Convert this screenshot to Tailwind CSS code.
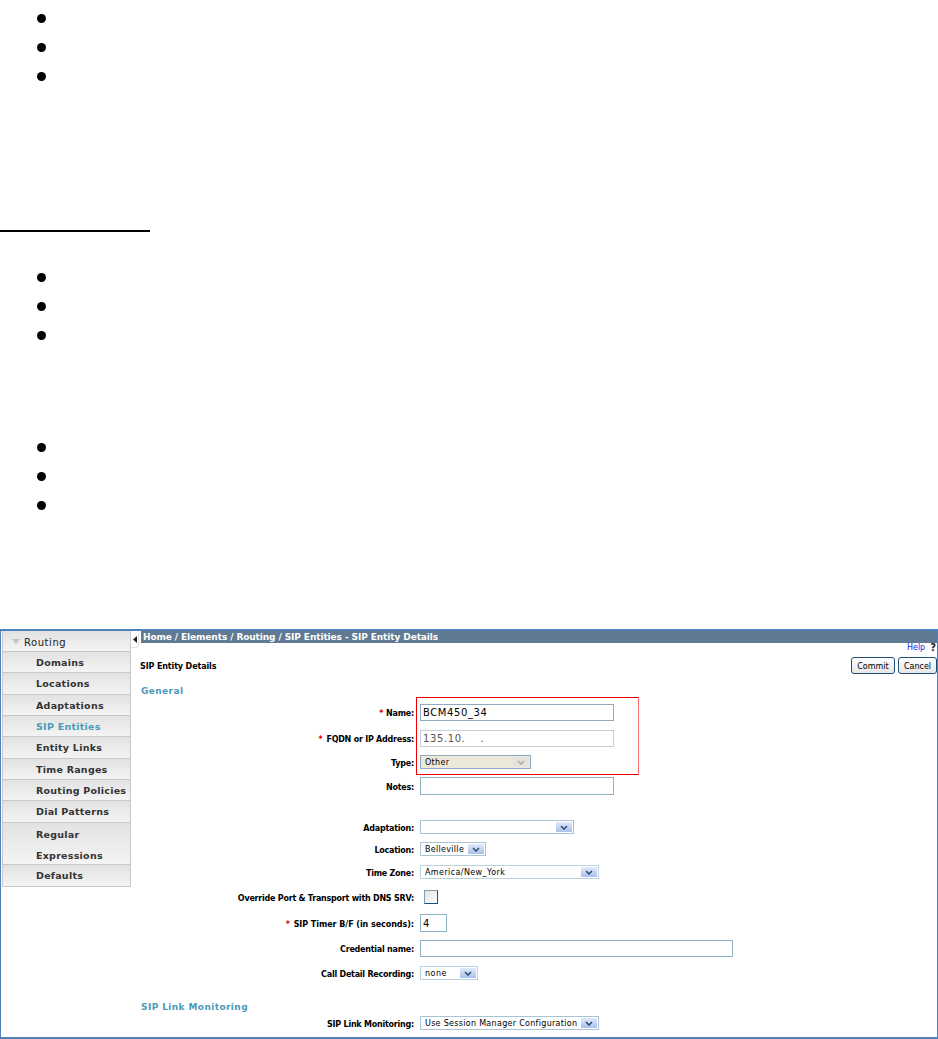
<!DOCTYPE html>
<html lang="en">
<head>
  <meta charset="UTF-8" />
  <title>SIP Entity Details</title>
  <script src="https://cdn.jsdelivr.net/npm/@tailwindcss/browser@4"></script>
</head>
<body class="bg-white w-[938px] h-[1039px] overflow-hidden font-['DejaVu_Sans',sans-serif] text-[8px] text-black">
  <!-- document text above the screenshot -->
  <div class="h-[629px] pt-[14px]">
    <div class="flex flex-col gap-[20px] ml-[37px]">
      <div class="w-[9px] h-[9px] rounded-full bg-black"></div>
      <div class="w-[9px] h-[9px] rounded-full bg-black"></div>
      <div class="w-[9px] h-[9px] rounded-full bg-black"></div>
    </div>
    <div class="w-[150px] h-[2px] bg-black mt-[149px]"></div>
    <div class="flex flex-col gap-[20px] ml-[37px] mt-[41px]">
      <div class="w-[9px] h-[9px] rounded-full bg-black"></div>
      <div class="w-[9px] h-[9px] rounded-full bg-black"></div>
      <div class="w-[9px] h-[9px] rounded-full bg-black"></div>
    </div>
    <div class="flex flex-col gap-[20px] ml-[37px] mt-[103px]">
      <div class="w-[9px] h-[9px] rounded-full bg-black"></div>
      <div class="w-[9px] h-[9px] rounded-full bg-black"></div>
      <div class="w-[9px] h-[9px] rounded-full bg-black"></div>
    </div>
  </div>

  <!-- screenshot panel -->
  <div class="relative h-[410px] flex border-t-2 border-b-2 border-l border-r border-[#4f81bd]">
    <!-- sidebar -->
    <div class="ml-[1px] w-[129px] h-[256px] shrink-0 border-x border-b border-[#c8c8c8] text-[#333] font-bold text-[9.5px] tracking-[0.25px]">
      <div class="h-[21px] flex items-center pt-[2px] pl-[9px] border-b border-[#c8c8c8] bg-gradient-to-b from-[#e2e2e2] to-[#f4f4f4]">
        <svg class="w-[8px] h-[5px] mr-[4px] -mt-[2px]" viewBox="0 0 8 5"><path d="M0 0h8L4 5z" fill="#c4c4c4"/></svg>
        <span class="font-normal text-[10px] tracking-[0.55px] text-[#222]">Routing</span>
      </div>
      <div class="h-[21px] flex items-center pt-[2px] pl-[33px] border-b border-[#c8c8c8] bg-gradient-to-b from-[#e2e2e2] to-[#f4f4f4]">Domains</div>
      <div class="h-[22px] flex items-center pt-[2px] pl-[33px] border-b border-[#c8c8c8] bg-gradient-to-b from-[#e2e2e2] to-[#f4f4f4]">Locations</div>
      <div class="h-[21px] flex items-center pt-[2px] pl-[33px] border-b border-[#c8c8c8] bg-gradient-to-b from-[#e2e2e2] to-[#f4f4f4]">Adaptations</div>
      <div class="h-[21px] flex items-center pt-[2px] pl-[33px] border-b border-[#c8c8c8] bg-gradient-to-b from-[#e2e2e2] to-[#f4f4f4] text-[#4b9ab8]">SIP Entities</div>
      <div class="h-[22px] flex items-center pt-[2px] pl-[33px] border-b border-[#c8c8c8] bg-gradient-to-b from-[#e2e2e2] to-[#f4f4f4]">Entity Links</div>
      <div class="h-[21px] flex items-center pt-[2px] pl-[33px] border-b border-[#c8c8c8] bg-gradient-to-b from-[#e2e2e2] to-[#f4f4f4]">Time Ranges</div>
      <div class="h-[21px] flex items-center pt-[2px] pl-[33px] border-b border-[#c8c8c8] bg-gradient-to-b from-[#e2e2e2] to-[#f4f4f4]">Routing Policies</div>
      <div class="h-[22px] flex items-center pt-[2px] pl-[33px] border-b border-[#c8c8c8] bg-gradient-to-b from-[#e2e2e2] to-[#f4f4f4]">Dial Patterns</div>
      <div class="h-[42px] flex flex-col justify-center gap-[9px] pt-[3px] pl-[33px] border-b border-[#c8c8c8] bg-gradient-to-b from-[#e2e2e2] to-[#f4f4f4] leading-[12px]"><span>Regular</span><span>Expressions</span></div>
      <div class="h-[21px] flex items-center pt-[2px] pl-[33px] bg-gradient-to-b from-[#e2e2e2] to-[#f4f4f4]">Defaults</div>
    </div>
    <!-- collapse tab -->
    <div class="w-[10px] shrink-0">
      <div class="w-[8px] h-[17px] flex items-center justify-center rounded-br-[3px] border-r border-b border-[#e4e4e4]">
        <svg class="w-[4px] h-[7px]" viewBox="0 0 4 7"><path d="M4 0v7L0 3.5z" fill="#222"/></svg>
      </div>
    </div>
    <!-- main column -->
    <div class="flex-1 min-w-0 font-bold tracking-[-0.23px]">
      <div class="h-[12px] bg-[#5f7a92] text-white text-[9px] leading-[12px] pl-[2px] tracking-[-0.1px] whitespace-nowrap">Home / Elements / Routing / SIP Entities - SIP Entity Details</div>
      <div class="h-[9px] flex justify-end items-center gap-[5px] pr-[1px] font-normal tracking-[0px]">
        <span class="text-[#1a1ae6]">Help</span><span class="font-bold text-[10px] text-[#222]">?</span>
      </div>
      <div class="mt-[5px] h-[17px] flex items-center justify-between">
        <span class="text-[8px] -ml-[1px] pt-[3px] tracking-[-0.12px]">SIP Entity Details</span>
        <div class="flex gap-[3px] font-normal tracking-[0px]">
          <div class="w-[44px] h-[17px] flex items-center justify-center pt-[2px] rounded-[3px] border border-[#1f4e79] bg-gradient-to-b from-white to-[#e6e6e6]">Commit</div>
          <div class="w-[39px] h-[17px] flex items-center justify-center pt-[2px] rounded-[3px] border border-[#1f4e79] bg-gradient-to-b from-white to-[#e6e6e6]">Cancel</div>
        </div>
      </div>
      <div class="mt-[10px] h-[12px] pt-[1px] leading-[12px] text-[9px] tracking-[0.4px] text-[#4b9ab8]">General</div>

      <!-- form rows -->
      <div class="mt-[8px] h-[17px] flex items-center">
        <div class="w-[273px] text-right pt-[3px]"><span class="text-[#e00000] mr-[3px]">*</span>Name:</div>
        <div class="ml-[6px] w-[194px] h-[17px] flex items-center border border-[#8fabbf] px-[2px] font-normal text-[10px] tracking-[0.6px]">BCM450_34</div>
      </div>
      <div class="mt-[9px] h-[17px] flex items-center">
        <div class="w-[273px] text-right pt-[3px]"><span class="text-[#e00000] mr-[4px]">*</span>FQDN or IP Address:</div>
        <input class="ml-[6px] w-[194px] h-[17px] border border-[#c2d0d9] px-[2px] font-normal text-[10px] leading-[15px] tracking-[0.6px] text-[#555]" value="135.10.    ." />
      </div>
      <div class="mt-[8px] h-[14px] flex items-center">
        <div class="w-[273px] text-right pt-[3px]">Type:</div>
        <div class="ml-[6px] w-[111px] h-[14px] flex items-center justify-between border border-[#8fabbf] bg-[#ece9d8] font-normal tracking-[0.3px] pl-[4px] pr-[1px]">
          <span class="pt-[2px]">Other</span>
          <div class="w-[16px] h-[10px] flex items-center justify-center bg-[#e4e4dc] rounded-[1px]">
            <svg class="w-[8px] h-[5px]" viewBox="0 0 8 5"><path d="M1 1l3 3 3-3" fill="none" stroke="#aaa" stroke-width="1.5"/></svg>
          </div>
        </div>
      </div>
      <div class="mt-[8px] h-[18px] flex items-center">
        <div class="w-[273px] text-right pt-[3px]">Notes:</div>
        <input class="ml-[6px] w-[194px] h-[18px] border border-[#8fb3c6]" />
      </div>
      <div class="mt-[25px] h-[14px] flex items-center">
        <div class="w-[273px] text-right pt-[3px]">Adaptation:</div>
        <div class="ml-[6px] w-[154px] h-[14px] flex items-center justify-end border border-[#a9c4d4] pr-[1px]">
          <div class="w-[16px] h-[10px] flex items-center justify-center bg-gradient-to-b from-[#e2eafa] to-[#a9c0ea]">
            <svg class="w-[8px] h-[5px]" viewBox="0 0 8 5"><path d="M1 1l3 3 3-3" fill="none" stroke="#2f4a6f" stroke-width="1.5"/></svg>
          </div>
        </div>
      </div>
      <div class="mt-[8px] h-[14px] flex items-center">
        <div class="w-[273px] text-right pt-[3px]">Location:</div>
        <div class="ml-[6px] w-[66px] h-[14px] flex items-center justify-between border border-[#a9c4d4] pl-[4px] pr-[1px] font-normal">
          <span class="pt-[2px] tracking-[0.3px]">Belleville</span>
          <div class="w-[16px] h-[10px] flex items-center justify-center bg-gradient-to-b from-[#e2eafa] to-[#a9c0ea]">
            <svg class="w-[8px] h-[5px]" viewBox="0 0 8 5"><path d="M1 1l3 3 3-3" fill="none" stroke="#2f4a6f" stroke-width="1.5"/></svg>
          </div>
        </div>
      </div>
      <div class="mt-[9px] h-[14px] flex items-center">
        <div class="w-[273px] text-right pt-[3px]">Time Zone:</div>
        <div class="ml-[6px] w-[179px] h-[14px] flex items-center justify-between border border-[#b8d2de] pl-[4px] pr-[1px] font-normal">
          <span class="pt-[2px] tracking-[0.4px]">America/New_York</span>
          <div class="w-[16px] h-[10px] flex items-center justify-center bg-gradient-to-b from-[#e2eafa] to-[#a9c0ea]">
            <svg class="w-[8px] h-[5px]" viewBox="0 0 8 5"><path d="M1 1l3 3 3-3" fill="none" stroke="#2f4a6f" stroke-width="1.5"/></svg>
          </div>
        </div>
      </div>
      <div class="mt-[11px] h-[14px] flex items-center">
        <div class="w-[273px] text-right pt-[3px]">Override Port &amp; Transport with DNS SRV:</div>
        <div class="ml-[10px] w-[14px] h-[14px] border border-[#1f4e79] border-t-[#7f9db9] border-l-[#7f9db9] bg-gradient-to-br from-[#e4e4e0] to-white"></div>
      </div>
      <div class="mt-[10px] h-[18px] flex items-center">
        <div class="w-[273px] text-right pt-[3px]"><span class="text-[#e00000] mr-[4px]">*</span><span class="tracking-[-0.05px]">SIP Timer B/F (in seconds):</span></div>
        <input class="ml-[6px] w-[27px] h-[18px] border border-[#8fb3c6] px-[2px] font-normal text-[10px]" value="4" />
      </div>
      <div class="mt-[8px] h-[17px] flex items-center">
        <div class="w-[273px] text-right pt-[3px]">Credential name:</div>
        <input class="ml-[6px] w-[313px] h-[17px] border border-[#8fb3c6]" />
      </div>
      <div class="mt-[9px] h-[14px] flex items-center">
        <div class="w-[273px] text-right pt-[3px]">Call Detail Recording:</div>
        <div class="ml-[6px] w-[58px] h-[14px] flex items-center justify-between border border-[#b8d2de] pl-[4px] pr-[1px] font-normal">
          <span class="pt-[2px] tracking-[0.5px]">none</span>
          <div class="w-[16px] h-[10px] flex items-center justify-center bg-gradient-to-b from-[#e2eafa] to-[#a9c0ea]">
            <svg class="w-[8px] h-[5px]" viewBox="0 0 8 5"><path d="M1 1l3 3 3-3" fill="none" stroke="#2f4a6f" stroke-width="1.5"/></svg>
          </div>
        </div>
      </div>
      <div class="mt-[20px] h-[12px] pt-[1px] leading-[12px] text-[9px] tracking-[0.4px] text-[#4b9ab8] whitespace-nowrap">SIP Link Monitoring</div>
      <div class="mt-[4px] h-[14px] flex items-center">
        <div class="w-[273px] text-right pt-[3px]">SIP Link Monitoring:</div>
        <div class="ml-[6px] w-[179px] h-[14px] flex items-center justify-between border border-[#a9c4d4] pl-[4px] pr-[1px] font-normal">
          <span class="pt-[2px] tracking-[0.3px] whitespace-nowrap">Use Session Manager Configuration</span>
          <div class="w-[16px] h-[10px] flex items-center justify-center bg-gradient-to-b from-[#e2eafa] to-[#a9c0ea]">
            <svg class="w-[8px] h-[5px]" viewBox="0 0 8 5"><path d="M1 1l3 3 3-3" fill="none" stroke="#2f4a6f" stroke-width="1.5"/></svg>
          </div>
        </div>
      </div>
    </div>
    <!-- red highlight over the form -->
    <div class="absolute left-[415px] top-[66px] w-[223px] h-[78px] border border-[#f00000] border-r-[#ff7070] pointer-events-none"></div>
  </div>
</body>
</html>
